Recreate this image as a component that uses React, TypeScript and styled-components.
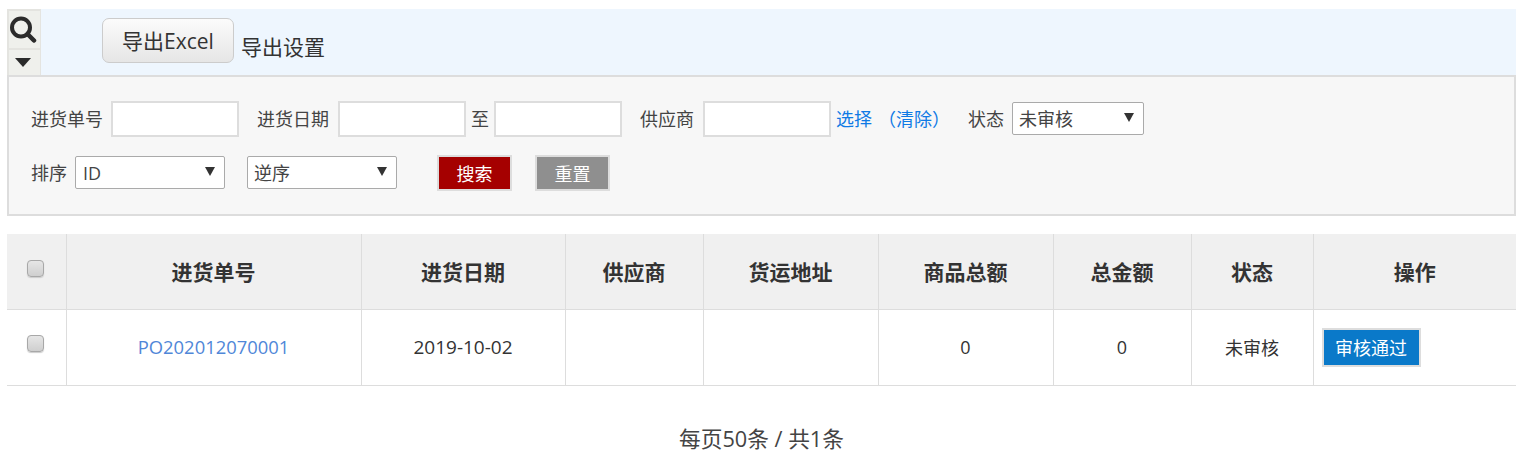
import React from "react";
import styled, { createGlobalStyle } from "styled-components";

const GlobalStyle = createGlobalStyle`
  html, body {
    margin: 0;
    padding: 0;
    background: #fff;
  }
  body {
    font-family: "Open Sans", "Noto Sans CJK SC", sans-serif;
    color: #333;
  }
  * {
    box-sizing: border-box;
  }
`;

const Page = styled.div`
  width: 1524px;
  padding: 9px 8px 0 7px;
`;

/* Toolbar */
const Toolbar = styled.div`
  display: flex;
  height: 66px;
  background: #eef6fe;
`;

const ToggleColumn = styled.div`
  display: flex;
  flex-direction: column;
  width: 34px;
  flex: none;
`;

const SearchToggle = styled.div`
  display: flex;
  align-items: center;
  justify-content: center;
  height: 40px;
  padding-right: 3px;
  background: #eff0ec;
  border: 2px solid #e4e4e0;
  border-bottom-width: 1px;
  border-right-width: 1px;
`;

const CaretToggle = styled.div`
  display: flex;
  align-items: center;
  justify-content: center;
  flex: 1;
  padding-right: 3px;
  background: #eff0ec;
  border-left: 2px solid #e4e4e0;
  border-right: 1px solid #e4e4e0;
  border-top: 1px solid #e4e4e0;
`;

const CaretDown = styled.span`
  display: block;
  width: 0;
  height: 0;
  border-left: 8px solid transparent;
  border-right: 8px solid transparent;
  border-top: 9px solid #2a2a2a;
`;

const ExportButton = styled.button`
  width: 132px;
  height: 45px;
  margin: 9px 0 0 61px;
  padding: 0 0 1px;
  border: 1px solid #ccc;
  border-radius: 7px;
  background: linear-gradient(#fbfbfb, #e6e6e6);
  color: #333;
  font: 21px "Open Sans", "Noto Sans CJK SC", sans-serif;
`;

const ExportSettings = styled.span`
  margin: 24px 0 0 7px;
  font-size: 21px;
  line-height: 28px;
  color: #333;
`;

/* Filter form */
const FilterBox = styled.div`
  display: flex;
  flex-direction: column;
  gap: 18px;
  height: 141px;
  padding: 24px 22px 0;
  background: #f7f7f7;
  border: 2px solid #ddd;
  margin-bottom: 18px;
`;

const FilterRow = styled.div`
  display: flex;
  align-items: flex-start;
  height: 36px;
`;

const FieldText = styled.span<{ $left?: number }>`
  flex: none;
  margin-left: ${(props) => props.$left || 0}px;
  font-size: 18px;
  line-height: 37px;
  color: #444;
  white-space: nowrap;
`;

const TextInput = styled.input<{ $left?: number }>`
  width: 128px;
  height: 36px;
  flex: none;
  margin-left: ${(props) => props.$left || 0}px;
  background: #fff;
  border: 2px solid #ddd;
  outline: none;
`;

const Link = styled.a<{ $left?: number }>`
  flex: none;
  margin-left: ${(props) => props.$left || 0}px;
  font-size: 18px;
  line-height: 37px;
  color: #0f7ae5;
  white-space: nowrap;
`;

const SelectWrap = styled.div<{ $width: number; $left?: number }>`
  position: relative;
  flex: none;
  width: ${(props) => props.$width}px;
  height: 33px;
  margin: 1px 0 0 ${(props) => props.$left || 0}px;

  &::after {
    content: "";
    position: absolute;
    right: 10px;
    top: 11px;
    border-left: 5px solid transparent;
    border-right: 5px solid transparent;
    border-top: 9px solid #333;
  }
`;

const Select = styled.select<{ $indent?: number }>`
  display: block;
  appearance: none;
  width: 100%;
  height: 100%;
  padding: 0 0 0 ${(props) => props.$indent || 6}px;
  background: #fff;
  border: 1px solid #aaa;
  border-radius: 2px;
  color: #444;
  font: 18px "Open Sans", "Noto Sans CJK SC", sans-serif;
  outline: none;
`;

const ActionButton = styled.button<{ $bg: string; $left?: number }>`
  flex: none;
  width: 75px;
  height: 36px;
  margin-left: ${(props) => props.$left || 0}px;
  padding: 0;
  background: ${(props) => props.$bg};
  border: 2px solid #ddd;
  color: #fff;
  font: 18px "Open Sans", "Noto Sans CJK SC", sans-serif;
`;

/* Table */
const Table = styled.table`
  width: 1509px;
  table-layout: fixed;
  border-collapse: collapse;
`;

const HeadRow = styled.tr`
  height: 75px;
  background: #f0f0f0;
`;

const BodyRow = styled.tr`
  height: 76px;
`;

const Th = styled.th`
  padding: 0;
  font-size: 21px;
  font-weight: 700;
  color: #333;
  text-align: center;
  border-left: 1px solid #ddd;
  border-bottom: 1px solid #ddd;

  &:first-child {
    border-left: 0;
  }
`;

const Td = styled.td`
  padding: 0;
  font-size: 18px;
  color: #333;
  text-align: center;
  border-left: 1px solid #ddd;
  border-bottom: 1px solid #ddd;

  &:first-child {
    border-left: 0;
  }
`;

const ActionCell = styled(Td)`
  text-align: left;
  padding-left: 8px;
`;

const OrderLink = styled.a`
  display: inline-block;
  margin-bottom: 2px;
  color: #5087d8;
  font-size: 18.4px;
`;

const DateText = styled.span`
  font-size: 19px;
`;

const Check = styled.input.attrs({ type: "checkbox" })<{ $up: number }>`
  appearance: none;
  display: block;
  width: 17px;
  height: 17px;
  margin: ${(props) => -props.$up}px 0 0 20px;
  background: linear-gradient(#e6e6e6, #cfcfcf);
  border: 1px solid #a8a8a8;
  border-radius: 4px;
  box-shadow: 0 1px 1px #ccc;
`;

const ApproveButton = styled.button`
  display: block;
  width: 99px;
  height: 39px;
  padding: 0;
  background: #0a79c9;
  border: 2px solid #ddd;
  color: #fff;
  font: 18px "Open Sans", "Noto Sans CJK SC", sans-serif;
`;

const Pager = styled.div`
  margin-top: 38px;
  font-size: 21.7px;
  line-height: 30px;
  color: #444;
  text-align: center;
`;

const columns = [
  { title: "进货单号", width: 295 },
  { title: "进货日期", width: 204 },
  { title: "供应商", width: 138 },
  { title: "货运地址", width: 175 },
  { title: "商品总额", width: 175 },
  { title: "总金额", width: 138 },
  { title: "状态", width: 122 },
  { title: "操作", width: 203 },
];

export default function App() {
  return (
    <Page>
      <GlobalStyle />
      <Toolbar>
        <ToggleColumn>
          <SearchToggle>
            <svg width="28" height="28" viewBox="0 0 28 28" fill="none" stroke="#2b2b2b">
              <circle cx="12" cy="11.5" r="9" strokeWidth="4" />
              <path d="M18.5 18 L25 24.5" strokeWidth="4.5" strokeLinecap="round" />
            </svg>
          </SearchToggle>
          <CaretToggle>
            <CaretDown />
          </CaretToggle>
        </ToggleColumn>
        <ExportButton>导出Excel</ExportButton>
        <ExportSettings>导出设置</ExportSettings>
      </Toolbar>

      <FilterBox>
        <FilterRow>
          <FieldText>进货单号</FieldText>
          <TextInput $left={8} />
          <FieldText $left={18}>进货日期</FieldText>
          <TextInput $left={9} />
          <FieldText $left={5}>至</FieldText>
          <TextInput $left={5} />
          <FieldText $left={18}>供应商</FieldText>
          <TextInput $left={9} />
          <Link $left={5}>选择</Link>
          <Link $left={6}>（清除）</Link>
          <FieldText $left={18}>状态</FieldText>
          <SelectWrap $width={132} $left={8}>
            <Select defaultValue="未审核">
              <option>未审核</option>
            </Select>
          </SelectWrap>
        </FilterRow>
        <FilterRow>
          <FieldText>排序</FieldText>
          <SelectWrap $width={150} $left={8}>
            <Select $indent={7} defaultValue="ID">
              <option>ID</option>
            </Select>
          </SelectWrap>
          <SelectWrap $width={150} $left={22}>
            <Select defaultValue="逆序">
              <option>逆序</option>
            </Select>
          </SelectWrap>
          <ActionButton $bg="#a50000" $left={40}>搜索</ActionButton>
          <ActionButton $bg="#8f8f8f" $left={23}>重置</ActionButton>
        </FilterRow>
      </FilterBox>

      <Table>
        <colgroup>
          <col style={{ width: 59 }} />
          {columns.map((c) => (
            <col key={c.title} style={{ width: c.width }} />
          ))}
        </colgroup>
        <thead>
          <HeadRow>
            <Th>
              <Check $up={5} />
            </Th>
            {columns.map((c) => (
              <Th key={c.title}>{c.title}</Th>
            ))}
          </HeadRow>
        </thead>
        <tbody>
          <BodyRow>
            <Td>
              <Check $up={8} />
            </Td>
            <Td>
              <OrderLink>PO202012070001</OrderLink>
            </Td>
            <Td>
              <DateText>2019-10-02</DateText>
            </Td>
            <Td />
            <Td />
            <Td>0</Td>
            <Td>0</Td>
            <Td>未审核</Td>
            <ActionCell>
              <ApproveButton>审核通过</ApproveButton>
            </ActionCell>
          </BodyRow>
        </tbody>
      </Table>

      <Pager>每页50条 / 共1条</Pager>
    </Page>
  );
}
